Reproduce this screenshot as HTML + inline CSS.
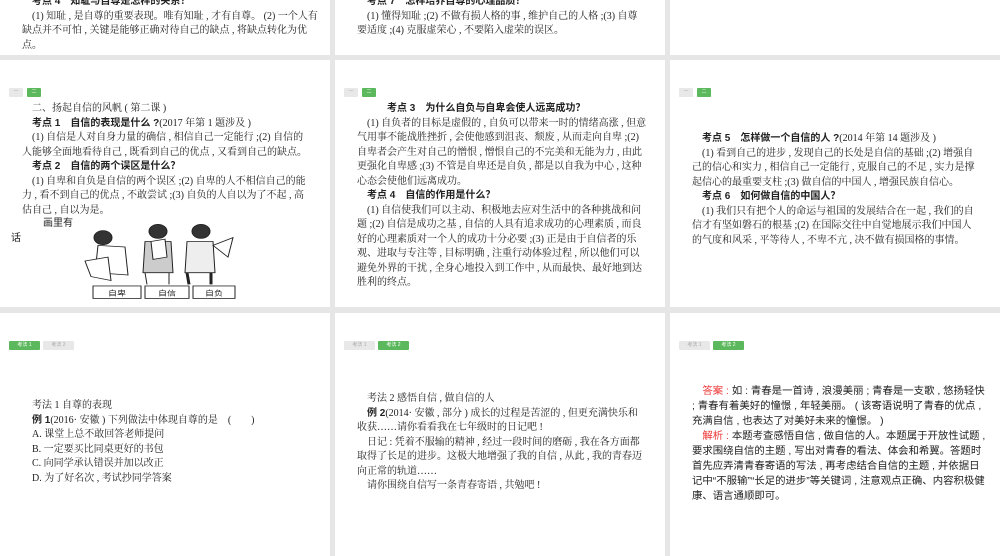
<!DOCTYPE html><html><head><meta charset="utf-8"><style>
body{margin:0;width:1000px;height:556px;background:#e6e6e6;position:relative;overflow:hidden;font-family:"Liberation Serif","Noto Serif CJK SC",serif;color:#222}
.p{position:absolute;background:#fff;overflow:hidden}
.t{position:absolute;font-size:10px;line-height:14.5px}
.b{font-family:"Liberation Sans","Noto Sans CJK SC",sans-serif;font-weight:bold}
.s{font-family:"Liberation Sans","Noto Sans CJK SC",sans-serif}
.tab{position:absolute;height:9px;font-size:5px;line-height:9px;text-align:center;color:#aaa;background:#e8e8e8;border-radius:1px;font-family:"Liberation Sans","Noto Sans CJK SC",sans-serif}
.g{background:#5cb85c;color:#fff}
.r{color:#e33}
</style></head><body>
<div class="p" style="left:0;top:0;width:330px;height:55px">
<div class="t" style="left:22px;top:-5px;width:300px"><span class="b">　考点 4　知耻与自尊是怎样的关系？</span><br>　(1) 知耻 , 是自尊的重要表现。唯有知耻 , 才有自尊。 (2) 一个人有缺点并不可怕 , 关键是能够正确对待自己的缺点 , 将缺点转化为优点。</div></div>
<div class="p" style="left:335px;top:0;width:330px;height:55px">
<div class="t" style="left:22px;top:-5px;width:290px"><span class="b">　考点 7　怎样培养自尊的心理品质？</span><br>　(1) 懂得知耻 ;(2) 不做有损人格的事 , 维护自己的人格 ;(3) 自尊要适度 ;(4) 克服虚荣心 , 不要陷入虚荣的误区。</div></div>
<div class="p" style="left:670px;top:0;width:330px;height:55px"></div>

<div class="p" style="left:0;top:60px;width:330px;height:247px">
<div class="tab" style="left:9px;top:28px;width:14px">一</div><div class="tab g" style="left:27px;top:28px;width:14px">二</div>
<div class="t" style="left:22px;top:42px;width:290px">　二、扬起自信的风帆 ( 第二课 )<br><span class="b">　考点 1　自信的表现是什么 ?</span>(2017 年第 1 题涉及 )<br>　(1) 自信是人对自身力量的确信 , 相信自己一定能行 ;(2) 自信的人能够全面地看待自己 , 既看到自己的优点 , 又看到自己的缺点。<br><span class="b">　考点 2　自信的两个误区是什么？</span><br>　(1) 自卑和自负是自信的两个误区 ;(2) 自卑的人不相信自己的能力 , 看不到自己的优点 , 不敢尝试 ;(3) 自负的人自以为了不起 , 高估自己 , 自以为是。</div>
<div class="t s" style="left:43px;top:157px">画里有</div><div class="t s" style="left:11px;top:172px">话</div>
<svg style="position:absolute;left:83px;top:162px" width="155" height="78" viewBox="0 0 155 100" preserveAspectRatio="none">
<g fill="none" stroke="#222" stroke-width="1">
<circle cx="20" cy="20" r="9" fill="#333"/><path d="M15 30 L12 65 L45 68 L42 32 Z"/><path d="M2 50 L25 45 L28 75 L8 70 Z" fill="#fff"/>
<circle cx="75" cy="12" r="9" fill="#333"/><path d="M62 25 L60 65 L90 65 L88 25 Z" fill="#ccc"/><path d="M62 65 L64 80 M86 65 L86 80"/><path d="M68 25 L82 22 L84 45 L70 48 Z" fill="#fff"/>
<circle cx="118" cy="12" r="9" fill="#333"/><path d="M104 25 L102 65 L132 65 L130 25 Z" fill="#eee"/><path d="M104 65 L106 80 M128 65 L128 80" stroke-width="3"/><path d="M130 30 L150 20 L145 45 Z" fill="#fff"/>
<rect x="10" y="82" width="48" height="16"/><rect x="62" y="82" width="44" height="16"/><rect x="110" y="82" width="42" height="16"/></g>
<g font-size="9" font-family="Noto Sans CJK SC" text-anchor="middle" fill="#222"><text x="34" y="94">自卑</text><text x="84" y="94">自信</text><text x="131" y="94">自负</text></g></svg>
</div>
<div class="p" style="left:335px;top:60px;width:330px;height:247px">
<div class="tab" style="left:9px;top:28px;width:14px">一</div><div class="tab g" style="left:27px;top:28px;width:14px">二</div>
<div class="t" style="left:22px;top:42px;width:290px"><span class="b">　　　考点 3　为什么自负与自卑会使人远离成功？</span><br>　(1) 自负者的目标是虚假的 , 自负可以带来一时的情绪高涨 , 但意气用事不能战胜挫折 , 会使他感到沮丧、颓废 , 从而走向自卑 ;(2) 自卑者会产生对自己的憎恨 , 憎恨自己的不完美和无能为力 , 由此更强化自卑感 ;(3) 不管是自卑还是自负 , 都是以自我为中心 , 这种心态会使他们远离成功。<br><span class="b">　考点 4　自信的作用是什么？</span><br>　(1) 自信使我们可以主动、积极地去应对生活中的各种挑战和问题 ;(2) 自信是成功之基 , 自信的人具有追求成功的心理素质 , 而良好的心理素质对一个人的成功十分必要 ;(3) 正是由于自信者的乐观、进取与专注等 , 目标明确 , 注重行动体验过程 , 所以他们可以避免外界的干扰 , 全身心地投入到工作中 , 从而最快、最好地到达胜利的终点。</div></div>
<div class="p" style="left:670px;top:60px;width:330px;height:247px">
<div class="tab" style="left:9px;top:28px;width:14px">一</div><div class="tab g" style="left:27px;top:28px;width:14px">二</div>
<div class="t" style="left:22px;top:72px;width:288px"><span class="b">　考点 5　怎样做一个自信的人 ?</span>(2014 年第 14 题涉及 )<br>　(1) 看到自己的进步 , 发现自己的长处是自信的基础 ;(2) 增强自己的信心和实力 , 相信自己一定能行 , 克服自己的不足 , 实力是撑起信心的最重要支柱 ;(3) 做自信的中国人 , 增强民族自信心。<br><span class="b">　考点 6　如何做自信的中国人？</span><br>　(1) 我们只有把个人的命运与祖国的发展结合在一起 , 我们的自信才有坚如磐石的根基 ;(2) 在国际交往中自觉地展示我们中国人的气度和风采 , 平等待人 , 不卑不亢 , 决不做有损国格的事情。</div></div>

<div class="p" style="left:0;top:313px;width:330px;height:243px">
<div class="tab g" style="left:9px;top:28px;width:31px">考法 1</div><div class="tab" style="left:43px;top:28px;width:31px">考法 2</div>
<div class="t" style="left:32px;top:86px;width:290px">考法 1 自尊的表现<br><span class="b">例 1</span>(2016· 安徽 ) 下列做法中体现自尊的是　(　　)<br>A. 课堂上总不敢回答老师提问<br>B. 一定要买比同桌更好的书包<br>C. 向同学承认错误并加以改正<br>D. 为了好名次 , 考试抄同学答案</div></div>
<div class="p" style="left:335px;top:313px;width:330px;height:243px">
<div class="tab" style="left:9px;top:28px;width:31px">考法 1</div><div class="tab g" style="left:43px;top:28px;width:31px">考法 2</div>
<div class="t" style="left:22px;top:79px;width:290px">　考法 2 感悟自信 , 做自信的人<br>　<span class="b">例 2</span>(2014· 安徽 , 部分 ) 成长的过程是苦涩的 , 但更充满快乐和收获……请你看看我在七年级时的日记吧 !<br>　日记 : 凭着不服输的精神 , 经过一段时间的磨砺 , 我在各方面都取得了长足的进步。这极大地增强了我的自信 , 从此 , 我的青春迈向正常的轨道……<br>　请你围绕自信写一条青春寄语 , 共勉吧 !</div></div>
<div class="p" style="left:670px;top:313px;width:330px;height:243px">
<div class="tab" style="left:9px;top:28px;width:31px">考法 1</div><div class="tab g" style="left:43px;top:28px;width:31px">考法 2</div>
<div class="t s" style="left:22px;top:71px;width:296px;font-size:10.4px;line-height:15px">　<span class="r">答案 :</span> 如 : 青春是一首诗 , 浪漫美丽 ; 青春是一支歌 , 悠扬轻快 ; 青春有着美好的憧憬 , 年轻美丽。 ( 该寄语说明了青春的优点 , 充满自信 , 也表达了对美好未来的憧憬。 )<br>　<span class="r">解析 :</span> 本题考查感悟自信 , 做自信的人。本题属于开放性试题 , 要求围绕自信的主题 , 写出对青春的看法、体会和希翼。答题时首先应弄清青春寄语的写法 , 再考虑结合自信的主题 , 并依据日记中“不服输”“长足的进步”等关键词 , 注意观点正确、内容积极健康、语言通顺即可。</div></div>
</body></html>
